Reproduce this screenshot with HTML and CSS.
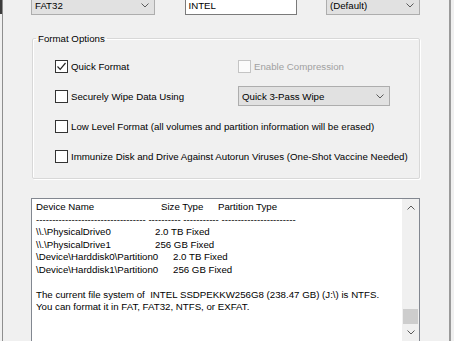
FILE: index.html
```html
<!DOCTYPE html>
<html lang="en">
<head>
  <meta charset="UTF-8" />
  <meta name="viewport" content="width=device-width, initial-scale=1.0"/>
  <title>Format Options</title>
  <link rel="stylesheet" href="styles.css">
</head>
<body>
  <div class="screen">
    <div class="edge-left"><div class="edge-cap"></div></div>

    <div class="dialog">
      <div class="top-row">
        <div class="combo fs">
          <span>FAT32</span>
          <svg class="chev" width="8" height="5" viewBox="0 0 8 5"><polyline points="0.5,0.5 4,4 7.5,0.5"/></svg>
        </div>
        <div class="textbox">INTEL</div>
        <div class="combo cluster">
          <span>(Default)</span>
          <svg class="chev" width="8" height="5" viewBox="0 0 8 5"><polyline points="0.5,0.5 4,4 7.5,0.5"/></svg>
        </div>
      </div>

      <fieldset class="options">
        <legend>Format Options</legend>
        <div class="opt-grid">
          <label class="check">
            <span class="box">
              <svg width="11" height="11" viewBox="0 0 11 11"><polyline points="1.5,5.5 4.2,8.3 9.5,2"/></svg>
            </span>
            Quick Format
          </label>
          <label class="check disabled"><span class="box"></span>Enable Compression</label>

          <label class="check"><span class="box"></span>Securely Wipe Data Using</label>
          <div class="combo wipe">
            <span>Quick 3-Pass Wipe</span>
            <svg class="chev" width="8" height="5" viewBox="0 0 8 5"><polyline points="0.5,0.5 4,4 7.5,0.5"/></svg>
          </div>

          <label class="check wide"><span class="box"></span>Low Level Format (all volumes and partition information will be erased)</label>
          <label class="check wide"><span class="box"></span>Immunize Disk and Drive Against Autorun Viruses (One-Shot Vaccine Needed)</label>
        </div>
      </fieldset>

      <div class="log">
        <div class="log-text">
          <div class="line"><span class="h-name">Device Name</span><span class="h-size">Size Type</span><span>Partition Type</span></div>
          <div class="line">---------------------------------- ---------- ----------- -----------------------</div>
          <div class="line"><span class="pd-name">\\.\PhysicalDrive0</span><span>2.0 TB Fixed</span></div>
          <div class="line"><span class="pd-name">\\.\PhysicalDrive1</span><span>256 GB Fixed</span></div>
          <div class="line"><span class="hd-name">\Device\Harddisk0\Partition0</span><span>2.0 TB Fixed</span></div>
          <div class="line"><span class="hd-name">\Device\Harddisk1\Partition0</span><span>256 GB Fixed</span></div>
          <div class="line blank"></div>
          <div class="line">The current file system of  INTEL SSDPEKKW256G8 (238.47 GB) (J:\) is NTFS.</div>
          <div class="line">You can format it in FAT, FAT32, NTFS, or EXFAT.</div>
        </div>
        <div class="scrollbar">
          <div class="sb-btn">
            <svg class="chev" width="8" height="5" viewBox="0 0 8 5"><polyline points="0.5,4.5 4,1 7.5,4.5"/></svg>
          </div>
          <div class="sb-track"><div class="sb-thumb"></div></div>
          <div class="sb-btn">
            <svg class="chev" width="8" height="5" viewBox="0 0 8 5"><polyline points="0.5,0.5 4,4 7.5,0.5"/></svg>
          </div>
        </div>
      </div>
    </div>

    <div class="edge-right"></div>
  </div>
</body>
</html>
```

FILE: styles.css
```css
body {
  margin: 0;
  background-color: #f0f0f0;
  font-family: "Liberation Sans", Arial, sans-serif;
  font-size: 9.7px;
  color: #000;
}
.screen {
  width: 454px;
  height: 341px;
  overflow: hidden;
  display: flex;
}
.edge-left {
  width: 2px;
  flex-shrink: 0;
  border-right: 1px solid #8e8e8e;
}
.edge-cap {
  height: 14px;
  background: #3c3c3c;
}
.dialog {
  width: 389px;
  flex-shrink: 0;
  padding: 0 29px 0 28px;
}
.edge-right {
  width: 2px;
  flex-shrink: 0;
  background: #9a9a9a;
}

/* top row of combos */
.top-row {
  display: flex;
  justify-content: space-between;
  margin-top: -6px;
  height: 21px;
}
.combo {
  box-sizing: border-box;
  height: 21px;
  display: flex;
  align-items: center;
  justify-content: space-between;
  padding: 2px 5px 0 3px;
  border: 1px solid #adadad;
  background: #e1e1e1;
}
.fs { width: 124px; }
.cluster { width: 94px; }
.textbox {
  box-sizing: border-box;
  width: 112px;
  height: 21px;
  display: flex;
  align-items: center;
  padding: 1px 0 0 3px;
  border: 1px solid #7a7a7a;
  background: #fff;
}
.chev polyline {
  fill: none;
  stroke: #5a5a5a;
  stroke-width: 1;
}

/* group box */
.options {
  box-sizing: border-box;
  width: 388px;
  margin: 17px 0 0 1px;
  padding: 0 0 12px 0;
  border: 1px solid #d8d8d8;
  border-radius: 2px;
  box-shadow: inset 1px 1px 0 #fff, 1px 1px 0 #fff;
}
.options legend {
  margin-left: 3px;
  padding: 0 2px;
  line-height: 13px;
}
.opt-grid {
  display: grid;
  grid-template-columns: 183px 152px;
  grid-auto-rows: 20px;
  row-gap: 10px;
  margin-top: 11px;
  padding-left: 22px;
}
.check {
  display: flex;
  align-items: center;
  gap: 3px;
  white-space: nowrap;
}
.wide { grid-column: 1 / -1; }
.box {
  box-sizing: border-box;
  width: 13px;
  height: 13px;
  flex-shrink: 0;
  display: flex;
  align-items: center;
  justify-content: center;
  border: 1px solid #333;
  background: #fff;
}
.box polyline {
  fill: none;
  stroke: #222;
  stroke-width: 1.2;
}
.disabled { color: #a0a0a0; }
.disabled .box {
  border-color: #c4c4c4;
  background: #fbfbfb;
}
.wipe {
  height: 20px;
  padding-top: 1px;
}

/* device list */
.log {
  box-sizing: border-box;
  width: 389px;
  height: 144px;
  margin-top: 19px;
  display: flex;
  border: 1px solid #828790;
  background: #fff;
}
.log-text {
  flex: 1;
  padding: 2px 0 0 4px;
  overflow: hidden;
}
.line {
  height: 12.5px;
  line-height: 12.5px;
  white-space: pre;
  display: flex;
}
.h-name { width: 125px; flex-shrink: 0; }
.h-size { width: 57px; flex-shrink: 0; }
.pd-name { width: 119px; flex-shrink: 0; }
.hd-name { width: 137px; flex-shrink: 0; }
.scrollbar {
  width: 17px;
  display: flex;
  flex-direction: column;
  background: #f0f0f0;
}
.sb-btn {
  height: 17px;
  display: flex;
  align-items: center;
  justify-content: center;
}
.sb-track {
  flex: 1;
  display: flex;
  flex-direction: column;
  justify-content: flex-end;
  padding: 0 1px;
}
.sb-thumb {
  height: 15px;
  background: #cdcdcd;
}
```
